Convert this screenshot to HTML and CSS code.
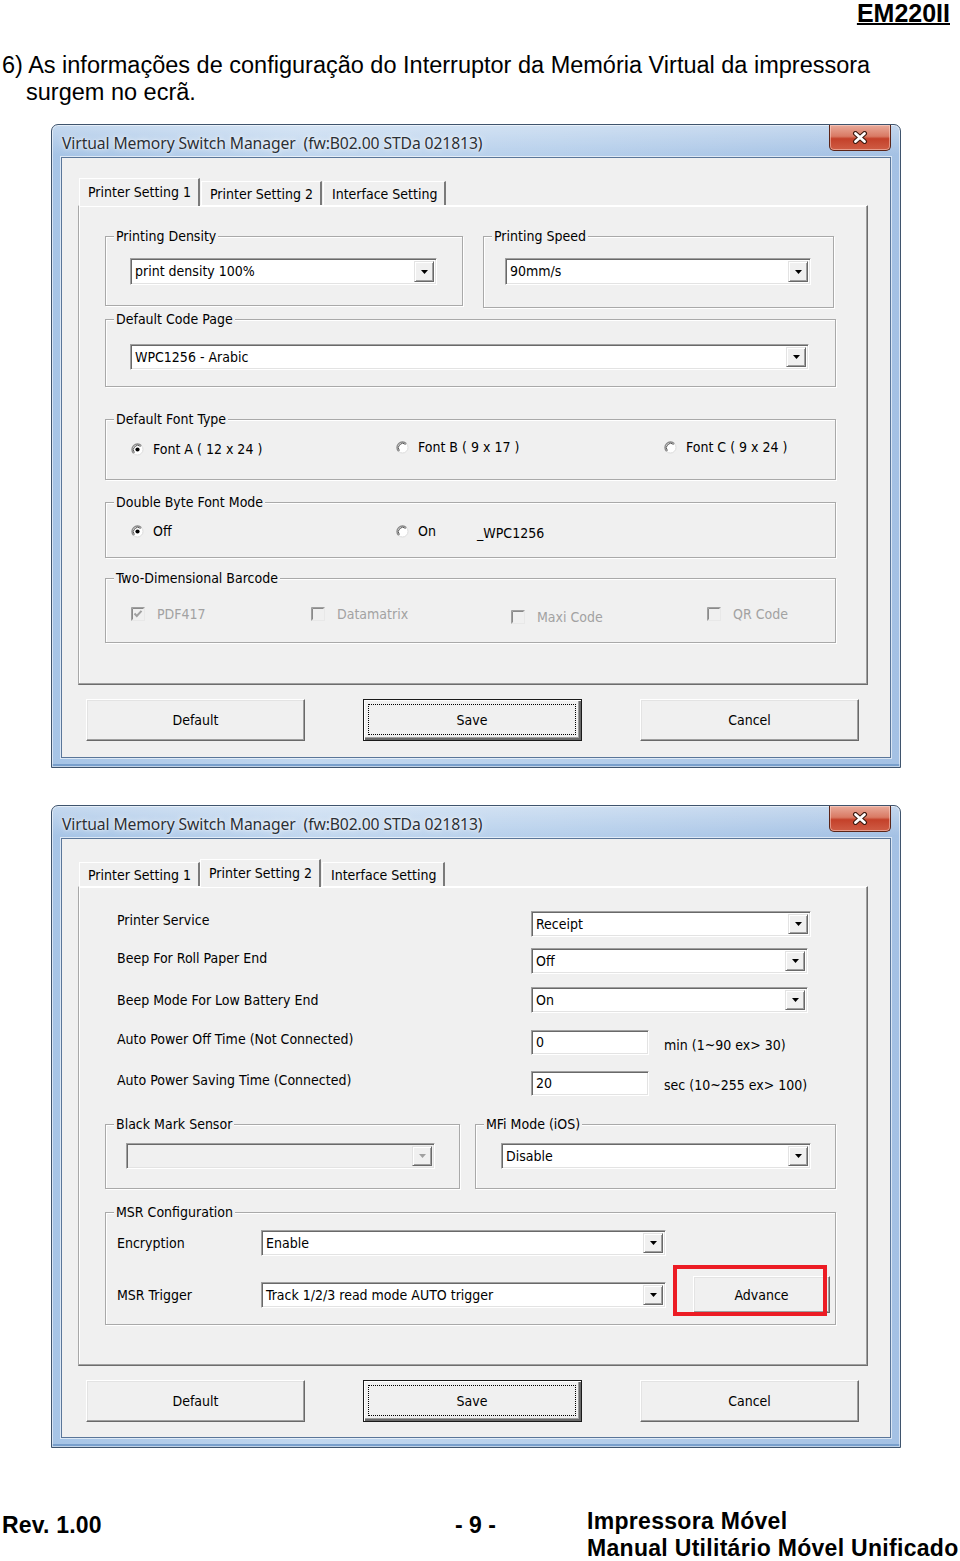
FILE: index.html
```html
<!DOCTYPE html>
<html lang="pt">
<head>
<meta charset="utf-8">
<title>EM220II - Virtual Memory Switch Manager</title>
<link rel="stylesheet" href="styles.css">
</head>
<body>
<div class="page">
  <header class="doc-head"><span class="model">EM220II</span></header>
  <p class="intro">6) As informações de configuração do Interruptor da Memória Virtual da impressora<br>surgem no ecrã.</p>

  <!-- Window 1 -->
  <section class="window">
    <div class="titlebar">
      <span class="title">Virtual Memory Switch Manager&nbsp;&nbsp;(fw:B02.00 STDa 021813)</span>
      <span class="close"><svg width="16" height="13" viewBox="0 0 16 13"><path d="M3.5 2.5 L12.5 10.5 M12.5 2.5 L3.5 10.5" stroke="#3d1a10" stroke-width="5" stroke-linecap="round" fill="none"/><path d="M3.5 2.5 L12.5 10.5 M12.5 2.5 L3.5 10.5" stroke="#fff" stroke-width="2.8" stroke-linecap="round" fill="none"/></svg></span>
    </div>
    <div class="client">
      <div class="tabs">
        <div class="tab active">Printer Setting 1</div>
        <div class="tab">Printer Setting 2</div>
        <div class="tab">Interface Setting</div>
      </div>
      <div class="panel">
        <div class="grp-row r-top">
          <div class="group g-density">
            <div class="legend">Printing Density</div>
            <div class="combo c-density"><span class="val">print density 100%</span><span class="drop"><svg width="7" height="4" viewBox="0 0 7 4"><polygon points="0,0 7,0 3.5,4" fill="#000"/></svg></span></div>
          </div>
          <div class="group g-speed">
            <div class="legend">Printing Speed</div>
            <div class="combo c-speed"><span class="val">90mm/s</span><span class="drop"><svg width="7" height="4" viewBox="0 0 7 4"><polygon points="0,0 7,0 3.5,4" fill="#000"/></svg></span></div>
          </div>
        </div>

        <div class="group g-codepage">
          <div class="legend">Default Code Page</div>
          <div class="combo c-codepage"><span class="val">WPC1256 - Arabic</span><span class="drop"><svg width="7" height="4" viewBox="0 0 7 4"><polygon points="0,0 7,0 3.5,4" fill="#000"/></svg></span></div>
        </div>

        <div class="group g-font">
          <div class="legend">Default Font Type</div>
          <div class="opts o-font">
            <label class="opt"><svg class="radio" width="13" height="13" viewBox="0 0 13 13"><circle cx="6.5" cy="6.5" r="5.5" fill="#fff" stroke="#dcdcdc"/><path d="M2.6 10.4 A5.5 5.5 0 0 1 10.4 2.6" stroke="#8a8a8a" stroke-width="1.3" fill="none"/><path d="M3.4 9.6 A4.4 4.4 0 0 1 9.6 3.4" stroke="#555" fill="none"/><circle cx="6.5" cy="6.5" r="2.1" fill="#000"/></svg>Font A ( 12 x 24 )</label>
            <label class="opt up"><svg class="radio" width="13" height="13" viewBox="0 0 13 13"><circle cx="6.5" cy="6.5" r="5.5" fill="#fff" stroke="#dcdcdc"/><path d="M2.6 10.4 A5.5 5.5 0 0 1 10.4 2.6" stroke="#8a8a8a" stroke-width="1.3" fill="none"/><path d="M3.4 9.6 A4.4 4.4 0 0 1 9.6 3.4" stroke="#555" fill="none"/></svg>Font B ( 9 x 17 )</label>
            <label class="opt up"><svg class="radio" width="13" height="13" viewBox="0 0 13 13"><circle cx="6.5" cy="6.5" r="5.5" fill="#fff" stroke="#dcdcdc"/><path d="M2.6 10.4 A5.5 5.5 0 0 1 10.4 2.6" stroke="#8a8a8a" stroke-width="1.3" fill="none"/><path d="M3.4 9.6 A4.4 4.4 0 0 1 9.6 3.4" stroke="#555" fill="none"/></svg>Font C ( 9 x 24 )</label>
          </div>
        </div>

        <div class="group g-double">
          <div class="legend">Double Byte Font Mode</div>
          <div class="opts o-double">
            <label class="opt"><svg class="radio" width="13" height="13" viewBox="0 0 13 13"><circle cx="6.5" cy="6.5" r="5.5" fill="#fff" stroke="#dcdcdc"/><path d="M2.6 10.4 A5.5 5.5 0 0 1 10.4 2.6" stroke="#8a8a8a" stroke-width="1.3" fill="none"/><path d="M3.4 9.6 A4.4 4.4 0 0 1 9.6 3.4" stroke="#555" fill="none"/><circle cx="6.5" cy="6.5" r="2.1" fill="#000"/></svg>Off</label>
            <label class="opt"><svg class="radio" width="13" height="13" viewBox="0 0 13 13"><circle cx="6.5" cy="6.5" r="5.5" fill="#fff" stroke="#dcdcdc"/><path d="M2.6 10.4 A5.5 5.5 0 0 1 10.4 2.6" stroke="#8a8a8a" stroke-width="1.3" fill="none"/><path d="M3.4 9.6 A4.4 4.4 0 0 1 9.6 3.4" stroke="#555" fill="none"/></svg>On</label>
            <span class="opt plain">_WPC1256</span>
          </div>
        </div>

        <div class="group g-barcode">
          <div class="legend">Two-Dimensional Barcode</div>
          <div class="opts o-barcode">
            <label class="opt dis"><svg class="check" width="14" height="14" viewBox="0 0 14 14"><rect x="0.5" y="0.5" width="13" height="13" fill="#f0f0f0" stroke="#e8e8e8"/><path d="M0.5 13.5 V0.5 H13.5" stroke="#a0a0a0" fill="none"/><path d="M1.5 12.5 V1.5 H12.5" stroke="#8a8a8a" fill="none"/><path d="M3.5 6.5 L5.8 9 L10.5 3.8" stroke="#a0a0a0" stroke-width="2" fill="none"/></svg>PDF417</label>
            <label class="opt dis"><svg class="check" width="14" height="14" viewBox="0 0 14 14"><rect x="0.5" y="0.5" width="13" height="13" fill="#f0f0f0" stroke="#e8e8e8"/><path d="M0.5 13.5 V0.5 H13.5" stroke="#a0a0a0" fill="none"/><path d="M1.5 12.5 V1.5 H12.5" stroke="#8a8a8a" fill="none"/></svg>Datamatrix</label>
            <label class="opt dis low"><svg class="check" width="14" height="14" viewBox="0 0 14 14"><rect x="0.5" y="0.5" width="13" height="13" fill="#f0f0f0" stroke="#e8e8e8"/><path d="M0.5 13.5 V0.5 H13.5" stroke="#a0a0a0" fill="none"/><path d="M1.5 12.5 V1.5 H12.5" stroke="#8a8a8a" fill="none"/></svg>Maxi Code</label>
            <label class="opt dis"><svg class="check" width="14" height="14" viewBox="0 0 14 14"><rect x="0.5" y="0.5" width="13" height="13" fill="#f0f0f0" stroke="#e8e8e8"/><path d="M0.5 13.5 V0.5 H13.5" stroke="#a0a0a0" fill="none"/><path d="M1.5 12.5 V1.5 H12.5" stroke="#8a8a8a" fill="none"/></svg>QR Code</label>
          </div>
        </div>
      </div>
      <div class="btns">
        <div class="btn">Default</div>
        <div class="btn primary"><span class="focus">Save</span></div>
        <div class="btn">Cancel</div>
      </div>
    </div>
  </section>

  <!-- Window 2 -->
  <section class="window w2">
    <div class="titlebar">
      <span class="title">Virtual Memory Switch Manager&nbsp;&nbsp;(fw:B02.00 STDa 021813)</span>
      <span class="close"><svg width="16" height="13" viewBox="0 0 16 13"><path d="M3.5 2.5 L12.5 10.5 M12.5 2.5 L3.5 10.5" stroke="#3d1a10" stroke-width="5" stroke-linecap="round" fill="none"/><path d="M3.5 2.5 L12.5 10.5 M12.5 2.5 L3.5 10.5" stroke="#fff" stroke-width="2.8" stroke-linecap="round" fill="none"/></svg></span>
    </div>
    <div class="client">
      <div class="tabs">
        <div class="tab t1">Printer Setting 1</div>
        <div class="tab active">Printer Setting 2</div>
        <div class="tab">Interface Setting</div>
      </div>
      <div class="panel">
        <div class="form">
          <div class="frow fr1">
            <span class="flabel">Printer Service</span>
            <div class="combo c-w280"><span class="val">Receipt</span><span class="drop"><svg width="7" height="4" viewBox="0 0 7 4"><polygon points="0,0 7,0 3.5,4" fill="#000"/></svg></span></div>
          </div>
          <div class="frow fr2">
            <span class="flabel">Beep For Roll Paper End</span>
            <div class="combo c-w277"><span class="val">Off</span><span class="drop"><svg width="7" height="4" viewBox="0 0 7 4"><polygon points="0,0 7,0 3.5,4" fill="#000"/></svg></span></div>
          </div>
          <div class="frow fr3">
            <span class="flabel">Beep Mode For Low Battery End</span>
            <div class="combo c-w277"><span class="val">On</span><span class="drop"><svg width="7" height="4" viewBox="0 0 7 4"><polygon points="0,0 7,0 3.5,4" fill="#000"/></svg></span></div>
          </div>
          <div class="frow fr4">
            <span class="flabel">Auto Power Off Time (Not Connected)</span>
            <div class="textbox">0</div>
            <span class="hint">min (1~90 ex&gt; 30)</span>
          </div>
          <div class="frow fr5">
            <span class="flabel">Auto Power Saving Time (Connected)</span>
            <div class="textbox">20</div>
            <span class="hint">sec (10~255 ex&gt; 100)</span>
          </div>
        </div>

        <div class="grp-row r-sensor">
          <div class="group g-black">
            <div class="legend">Black Mark Sensor</div>
            <div class="combo c-black disabled"><span class="val"></span><span class="drop"><svg width="7" height="4" viewBox="0 0 7 4"><polygon points="0,0 7,0 3.5,4" fill="#a0a0a0"/></svg></span></div>
          </div>
          <div class="group g-mfi">
            <div class="legend">MFi Mode (iOS)</div>
            <div class="combo c-mfi"><span class="val">Disable</span><span class="drop"><svg width="7" height="4" viewBox="0 0 7 4"><polygon points="0,0 7,0 3.5,4" fill="#000"/></svg></span></div>
          </div>
        </div>

        <div class="group g-msr">
          <div class="legend">MSR Configuration</div>
          <div class="mrow mr1">
            <span class="mlabel">Encryption</span>
            <div class="combo c-msr"><span class="val">Enable</span><span class="drop"><svg width="7" height="4" viewBox="0 0 7 4"><polygon points="0,0 7,0 3.5,4" fill="#000"/></svg></span></div>
          </div>
          <div class="mrow mr2">
            <span class="mlabel">MSR Trigger</span>
            <div class="combo c-msr"><span class="val">Track 1/2/3 read mode AUTO trigger</span><span class="drop"><svg width="7" height="4" viewBox="0 0 7 4"><polygon points="0,0 7,0 3.5,4" fill="#000"/></svg></span></div>
            <div class="btn adv">Advance<span class="mark"></span></div>
          </div>
        </div>
      </div>
      <div class="btns">
        <div class="btn">Default</div>
        <div class="btn primary"><span class="focus">Save</span></div>
        <div class="btn">Cancel</div>
      </div>
    </div>
  </section>

  <footer class="doc-foot">
    <span class="rev">Rev. 1.00</span>
    <span class="pgnum">- 9 -</span>
    <span class="pub">Impressora Móvel<br>Manual Utilitário Móvel Unificado</span>
  </footer>
</div>
</body>
</html>
```

FILE: styles.css
```css
* { box-sizing: border-box; }
html, body { margin: 0; padding: 0; background: #fff; }
body { font-family: "Liberation Sans", Arial, Helvetica, sans-serif; color: #000; }

.page { width: 960px; height: 1561px; overflow: hidden; display: flex; flex-direction: column; }
.page > * { flex-shrink: 0; }

/* document header */
.doc-head { height: 26px; display: flex; justify-content: flex-end; padding-right: 10px; }
.model { font-size: 25px; line-height: 27px; font-weight: bold; text-decoration: underline; text-decoration-thickness: 2px; text-underline-offset: 1px; }

.intro { margin: 26px 0 0; padding-left: 26px; text-indent: -24px; font-size: 23.5px; line-height: 27px; }

/* window chrome */
.window {
  width: 850px; height: 644px; margin: 18px 0 0 51px;
  border: 1px solid #3f546d; border-radius: 7px 7px 0 0;
  padding: 0 9px 9px;
  background:
    linear-gradient(180deg, rgba(255,255,255,0.35) 0px, rgba(255,255,255,0) 30px),
    linear-gradient(90deg, #a6c4e6 0%, #c1d7ef 30%, #b6cfeb 60%, #a4c1e4 100%);
  box-shadow: inset 0 0 0 1px rgba(255,255,255,0.55), inset 0 -3px 0 #789fcc;
  display: flex; flex-direction: column;
}
.window.w2 { margin-top: 37px; height: 643px; }
.titlebar { height: 32px; display: flex; align-items: flex-start; }
.title {
  margin: 8px 0 0 1px;
  font-family: "Noto Sans", "Open Sans", sans-serif; font-size: 15.7px; line-height: 21px; letter-spacing: -0.1px;
  color: #2a2f36; text-shadow: 0 0 6px rgba(255,255,255,0.95), 0 0 2px rgba(255,255,255,0.9);
}
.close {
  margin-left: auto; width: 62px; height: 26px;
  border: 1px solid #5b2417; border-top: none; border-radius: 0 0 5px 5px;
  background: linear-gradient(180deg, #e9ab9b 0%, #d97a64 45%, #c4412a 55%, #cf5d45 100%);
  box-shadow: inset 0 0 0 1px rgba(255,220,210,0.5);
  display: flex; align-items: center; justify-content: center;
}
.client {
  flex: 1; background: #f0f0f0;
  border: 1px solid #5a7699;
  box-shadow: 0 0 0 1px rgba(255,255,255,0.6);
  padding-top: 20px;
  font-family: "DejaVu Sans Condensed", "DejaVu Sans", sans-serif; font-stretch: condensed;
  font-size: 14px; color: #000;
}

/* tabs */
.tabs { height: 27px; margin-left: 17px; display: flex; align-items: flex-end; }
.tab {
  height: 24px; padding: 3px 7px 0 8px; line-height: 18px; white-space: nowrap;
  background: #f0f0f0;
  border-top: 1px solid #fff; border-left: 1px solid #fff; border-right: 2px solid #7a7a7a;
  margin-right: 1px;
}
.tab.active { height: 28px; margin-bottom: -1px; position: relative; z-index: 1; padding-top: 4px; }
.w2 .tab.t1 { margin-right: 0; }

.panel {
  width: 790px; height: 480px; margin-left: 16px;
  border: 1px solid; border-color: #fff #6d6d6d #6d6d6d #a8a8a8;
  box-shadow: inset -1px -1px 0 #a0a0a0, inset 1px 1px 0 #fff;
  padding-left: 26px;
}

/* group boxes */
.group {
  border: 1px solid #a9a9a9; box-shadow: inset 1px 1px 0 #fff, 1px 1px 0 #fff;
  padding-left: var(--pl, 24px);
}
.legend {
  width: max-content; height: 16px; line-height: 16px;
  margin: -9px 0 0 calc(8px - var(--pl, 24px));
  padding: 0 2px; background: #f0f0f0;
}
.grp-row { display: flex; align-items: flex-start; }
.r-top { margin-top: 30px; gap: 20px; }
.g-density { width: 358px; height: 70px; --pl: 24px; }
.g-speed { width: 351px; height: 72px; --pl: 21px; }
.g-codepage { width: 731px; height: 68px; margin-top: 11px; --pl: 24px; }
.g-font { width: 731px; height: 61px; margin-top: 32px; --pl: 25px; }
.g-double { width: 731px; height: 56px; margin-top: 22px; --pl: 25px; }
.g-barcode { width: 731px; height: 65px; margin-top: 20px; --pl: 25px; }

/* combo boxes */
.combo {
  display: flex; height: 26px; padding: 1px;
  background: #fff;
  border: 1px solid; border-color: #a0a0a0 #fff #fff #a0a0a0;
  box-shadow: inset 1px 1px 0 #696969, inset -1px -1px 0 #e3e3e3;
}
.combo .val { flex: 1; padding: 0 0 0 3px; line-height: 22px; white-space: nowrap; overflow: hidden; }
.combo .drop {
  width: 20px; margin: 1px 1px 1px 0;
  background: #f0f0f0;
  border: 1px solid; border-color: #e3e3e3 #696969 #696969 #e3e3e3;
  box-shadow: inset 1px 1px 0 #fff, inset -1px -1px 0 #a0a0a0;
  display: flex; align-items: center; justify-content: center;
}
.combo.disabled { background: #f0f0f0; }
.c-density { width: 307px; height: 27px; margin-top: 14px; }
.c-speed { width: 306px; height: 27px; margin-top: 14px; }
.c-codepage { width: 679px; margin-top: 17px; }
.c-w280 { width: 280px; }
.c-w277 { width: 277px; }
.c-black { width: 309px; margin-top: 11px; }
.c-mfi { width: 310px; margin-top: 11px; }
.c-msr { width: 405px; }

/* radio / check options */
.opts { display: grid; align-items: start; }
.o-font { margin-top: 14px; grid-template-columns: 265px 268px auto; }
.o-double { margin-top: 13px; grid-template-columns: 265px 81px auto; }
.o-barcode { margin-top: 20px; grid-template-columns: 180px 200px 196px auto; }
.opt { display: flex; align-items: center; height: 16px; line-height: 16px; white-space: nowrap; }
.opt .radio { margin-right: 9px; flex: none; }
.opt .check { margin-right: 12px; flex: none; }
.opt.up { margin-top: -2px; }
.opt.low { margin-top: 3px; }
.opt.plain { margin-top: 2px; }
.opt.dis { color: #a2a2a2; }

/* form rows (window 2) */
.form { margin-top: 24px; padding-left: 12px; }
.frow { display: flex; align-items: flex-start; height: 26px; }
.fr2 { margin-top: 11px; }
.fr3 { margin-top: 13px; }
.fr4 { margin-top: 17px; height: 25px; }
.fr5 { margin-top: 16px; height: 25px; }
.flabel { width: 414px; line-height: 16px; white-space: nowrap; padding-top: 1px; }
.fr2 .flabel { padding-top: 2px; }
.fr3 .flabel { padding-top: 5px; }
.textbox {
  width: 118px; height: 25px; padding: 0 0 0 4px; line-height: 22px;
  background: #fff;
  border: 1px solid; border-color: #a0a0a0 #fff #fff #a0a0a0;
  box-shadow: inset 1px 1px 0 #696969, inset -1px -1px 0 #e3e3e3;
}
.hint { margin-left: 15px; padding-top: 7px; line-height: 16px; white-space: nowrap; }
.fr5 .hint { padding-top: 6px; }

.r-sensor { margin-top: 28px; gap: 15px; }
.g-black { width: 355px; height: 65px; --pl: 20px; }
.g-mfi { width: 361px; height: 65px; --pl: 25px; }
.g-msr { width: 731px; height: 113px; margin-top: 23px; --pl: 11px; }
.mrow { display: flex; align-items: center; }
.mr1 { margin-top: 10px; }
.mr2 { margin-top: 20px; }
.mlabel { width: 144px; line-height: 16px; }

/* buttons */
.btns { display: flex; gap: 58px; margin: 14px 0 0 24px; }
.btn {
  width: 219px; height: 42px;
  background: #f0f0f0;
  border: 1px solid; border-color: #fff #696969 #696969 #fff;
  box-shadow: inset -1px -1px 0 #a0a0a0, inset 1px 1px 0 #e3e3e3;
  display: flex; align-items: center; justify-content: center;
  line-height: 16px;
}
.btn.primary { border: 1px solid #1a1a1a; box-shadow: inset 1px 1px 0 #fff, inset -2px -2px 0 #696969, inset -3px -3px 0 #a0a0a0; padding: 4px 5px 5px 4px; }
.btn .focus { flex: 1; align-self: stretch; border: 1px dotted #000; display: flex; align-items: center; justify-content: center; }
.btn.adv { width: 137px; height: 37px; margin-left: 27px; position: relative; }
.btn.adv .mark {
  position: absolute; left: -21px; top: -12px; width: 154px; height: 51px;
  border: 4px solid #ec1c24;
}

/* document footer */
.doc-foot { margin-top: 60px; display: flex; font-weight: bold; font-size: 23px; line-height: 26.5px; }
.rev { width: 455px; padding-left: 2px; padding-top: 4px; letter-spacing: 0.2px; }
.pgnum { width: 132px; padding-top: 4px; }
.pub { white-space: nowrap; letter-spacing: 0.3px; }
```
